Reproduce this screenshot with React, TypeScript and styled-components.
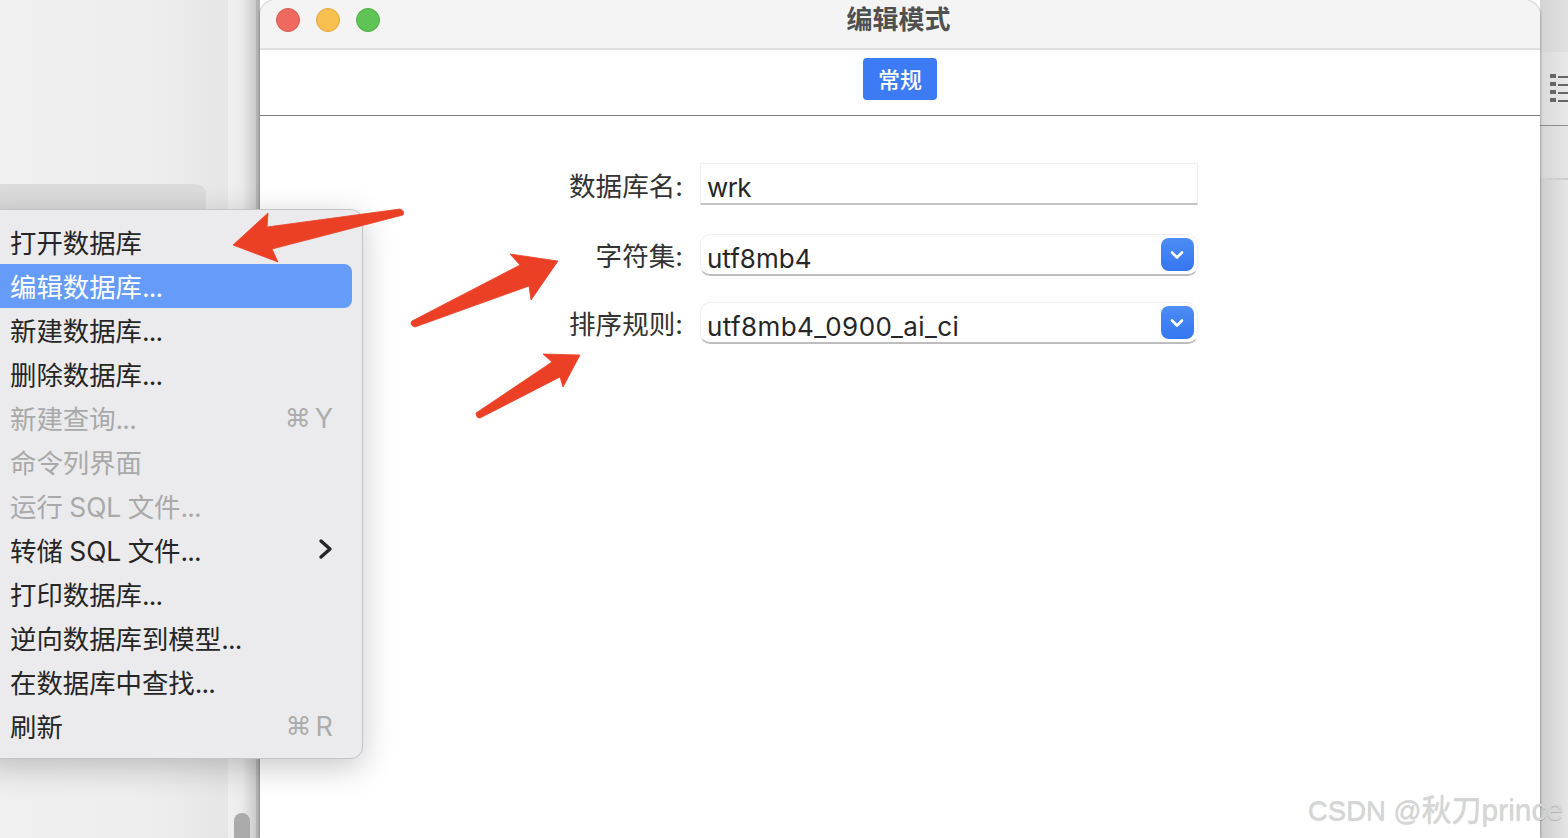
import React from "react";
import styled, { createGlobalStyle } from "styled-components";

const Global = createGlobalStyle`
  html, body { margin: 0; padding: 0; width: 1568px; height: 838px; overflow: hidden; background: #fff; }
  * { box-sizing: border-box; }
`;

const FONT = `Inter, "Noto Sans CJK SC", "Noto Sans", sans-serif`;

const Stage = styled.div`
  position: relative;
  width: 1568px;
  height: 838px;
  overflow: hidden;
  display: grid;
  grid-template-columns: 260px 1280px 28px;
  font-family: ${FONT};
  color: #262626;
`;

const Backdrop = styled.div`
  display: flex;
  background: #ececec;
  border-right: 4px solid #b4b4b4;
`;

const Sidebar = styled.div`
  width: 228px;
  padding-top: 184px;
  background: linear-gradient(90deg, #f0f0f0 0%, #eeeeee 65%, #e6e6e6 100%);
`;

const SidebarPanel = styled.div`
  width: 206px;
  height: 100px;
  border-radius: 0 10px 0 0;
  background: linear-gradient(180deg, #dcdcdc, #d6d6d6);
`;

const ScrollColumn = styled.div`
  flex: 1;
  display: flex;
  flex-direction: column;
  justify-content: flex-end;
  padding-left: 6px;
  background: linear-gradient(90deg, #f0f0f0 0%, #ebebeb 50%, #cbcbcb 100%);
`;

const ScrollThumb = styled.div`
  width: 16px;
  height: 25px;
  border-radius: 8px 8px 0 0;
  background: #aaaaaa;
`;

const Window = styled.div`
  position: relative;
  display: flex;
  flex-direction: column;
  background: #fff;
  border-radius: 16px 16px 0 0;
  box-shadow: 0 0 3px rgba(0, 0, 0, 0.45);
`;

const TitleBar = styled.div`
  position: relative;
  height: 50px;
  flex: none;
  display: flex;
  align-items: flex-start;
  justify-content: center;
  background: #f4f4f4;
  border-bottom: 2px solid #dfdfdf;
  border-radius: 16px 16px 0 0;
`;

const Lights = styled.div`
  position: absolute;
  left: 16px;
  top: 8px;
  display: flex;
  gap: 16px;
`;

const Light = styled.span<{ $fill: string; $edge: string }>`
  width: 24px;
  height: 24px;
  border-radius: 50%;
  background: ${(p) => p.$fill};
  border: 1px solid ${(p) => p.$edge};
`;

const Title = styled.div`
  font-size: 26px;
  line-height: 39px;
  font-weight: 700;
  color: #505050;
  margin-left: -3px;
`;

const TabBar = styled.div`
  height: 66px;
  flex: none;
  display: flex;
  justify-content: center;
  padding-top: 8px;
  border-bottom: 1px solid #7d7d7d;
`;

const Tab = styled.div`
  width: 74px;
  height: 42px;
  border-radius: 4px;
  background: #3d7bf4;
  color: #fff;
  font-size: 22px;
  line-height: 44px;
  text-align: center;
  font-weight: 500;
`;

const Form = styled.div`
  display: grid;
  grid-template-columns: 423px 498px;
  column-gap: 17px;
  padding-top: 47px;
`;

const Label = styled.div<{ $top: number }>`
  height: 42px;
  text-align: right;
  font-size: 26.6px;
  line-height: 47px;
  color: #333;
  margin-top: ${(p) => p.$top}px;
`;

const TextField = styled.div`
  height: 42px;
  padding-left: 6px;
  font-size: 26px;
  line-height: 47px;
  letter-spacing: -0.6px;
  background: #fff;
  border: 1px solid #f0f0f0;
  border-bottom: 2px solid #c4c4c4;
`;

const Select = styled.div<{ $top: number }>`
  position: relative;
  height: 42px;
  margin-top: ${(p) => p.$top}px;
  padding-left: 6px;
  font-size: 26px;
  line-height: 47px;
  background: #fff;
  border-radius: 10px;
  border: 1px solid #f0f0f0;
  border-bottom: 2px solid #bdbdbd;
`;

const WideValue = styled.span`
  letter-spacing: 0.4px;
`;

const SelectButton = styled.div`
  position: absolute;
  right: 3px;
  top: 3px;
  width: 33px;
  height: 33px;
  border-radius: 8px;
  display: flex;
  align-items: center;
  justify-content: center;
  padding-right: 1px;
  background: linear-gradient(180deg, #4d8df5 0%, #3575f0 100%);
`;

const RightEdge = styled.div`
  display: flex;
  flex-direction: column;
  background: #e4e4e4;
`;

const EdgeTop = styled.div`
  height: 52px;
  background: linear-gradient(90deg, #d4d4d4, #e0e0e0);
`;

const EdgeTools = styled.div`
  height: 74px;
  padding: 22px 0 0 10px;
  border-bottom: 1px solid #8c8c8c;
  background: linear-gradient(90deg, #d9d9d9, #e9e9e9);
`;

const EdgeStrip = styled.div`
  height: 54px;
  border-bottom: 2px solid #cfcfcf;
  background: linear-gradient(90deg, #d4d4d4, #e6e6e6);
`;

const EdgeRest = styled.div`
  flex: 1;
  background: linear-gradient(90deg, #cdcdcd, #e6e6e6);
`;

const Menu = styled.div`
  position: absolute;
  left: -20px;
  top: 209px;
  width: 383px;
  height: 550px;
  padding: 10px 10px 0 20px;
  background: #ebebed;
  border: 1px solid #c4c4c4;
  border-radius: 12px;
  box-shadow: 0 8px 32px rgba(0, 0, 0, 0.22);
`;

const MenuRow = styled.div<{ $active?: boolean; $muted?: boolean }>`
  height: 44px;
  display: flex;
  align-items: center;
  justify-content: space-between;
  margin-left: -20px;
  padding: 0 19px 2px 29px;
  font-size: 26.4px;
  white-space: nowrap;
  word-spacing: -1px;
  border-radius: ${(p) => (p.$active ? "0 8px 8px 0" : "0")};
  background: ${(p) => (p.$active ? "#659cf9" : "transparent")};
  color: ${(p) => (p.$active ? "#fff" : p.$muted ? "#a9a9a9" : "#262626")};
`;

const Dots = styled.span`
  letter-spacing: -0.8px;
`;

const Shortcut = styled.span`
  color: #adadad;
  font-size: 27px;
  display: flex;
  align-items: center;
  gap: 4px;
  padding-top: 2px;
`;

const ShortcutGlyph = styled.span`
  font-size: 26px;
  line-height: 30px;
`;

const Overlay = styled.svg`
  position: absolute;
  inset: 0;
  pointer-events: none;
`;

const Watermark = styled.div`
  position: absolute;
  left: 1308px;
  top: 790px;
  font-family: "Liberation Sans", "Noto Sans CJK SC", sans-serif;
  font-size: 27.5px;
  line-height: 40px;
  white-space: nowrap;
  color: #d6d6d6;
  text-shadow: 0 1px 1px rgba(0, 0, 0, 0.18);
`;

const WatermarkPart = styled.span<{ $size: number }>`
  font-size: ${(p) => p.$size}px;
`;

const Chevron = () => (
  <svg width="16" height="12" viewBox="0 0 16 12">
    <path d="M3 3.5 L8 8.5 L13 3.5" fill="none" stroke="#fff" strokeWidth="2.6" strokeLinecap="round" strokeLinejoin="round" />
  </svg>
);

const Row = ({ text, muted, active, dots, right }: { text: string; muted?: boolean; active?: boolean; dots?: boolean; right?: React.ReactNode }) => (
  <MenuRow $muted={muted} $active={active}>
    <span>
      {text}
      {dots && <Dots>...</Dots>}
    </span>
    {right}
  </MenuRow>
);

const Keys = ({ k }: { k: string }) => (
  <Shortcut>
    <ShortcutGlyph>⌘</ShortcutGlyph>
    <span>{k}</span>
  </Shortcut>
);

export default function App() {
  return (
    <Stage>
      <Global />
      <Backdrop>
        <Sidebar>
          <SidebarPanel />
        </Sidebar>
        <ScrollColumn>
          <ScrollThumb />
        </ScrollColumn>
      </Backdrop>
      <Window>
        <TitleBar>
          <Lights>
            <Light $fill="#ee6a5f" $edge="#d5594f" />
            <Light $fill="#f6bf4f" $edge="#dfa63c" />
            <Light $fill="#5fc454" $edge="#4fad46" />
          </Lights>
          <Title>编辑模式</Title>
        </TitleBar>
        <TabBar>
          <Tab>常规</Tab>
        </TabBar>
        <Form>
          <Label $top={0}>数据库名:</Label>
          <TextField>wrk</TextField>
          <Label $top={28}>字符集:</Label>
          <Select $top={29}>
            utf8mb4
            <SelectButton><Chevron /></SelectButton>
          </Select>
          <Label $top={25}>排序规则:</Label>
          <Select $top={26}>
            <WideValue>utf8mb4_0900_ai_ci</WideValue>
            <SelectButton><Chevron /></SelectButton>
          </Select>
        </Form>
      </Window>
      <RightEdge>
        <EdgeTop />
        <EdgeTools>
          <svg width="18" height="30" viewBox="0 0 18 30">
            <g fill="#666">
              <rect x="0" y="0" width="6" height="4" /><rect x="8" y="2" width="10" height="2" />
              <rect x="0" y="8" width="6" height="4" /><rect x="8" y="10" width="10" height="2" />
              <rect x="0" y="16" width="6" height="4" /><rect x="8" y="18" width="10" height="2" />
              <rect x="0" y="24" width="6" height="4" /><rect x="8" y="26" width="10" height="2" />
            </g>
          </svg>
        </EdgeTools>
        <EdgeStrip />
        <EdgeRest />
      </RightEdge>
      <Menu>
        <Row text="打开数据库" />
        <Row text="编辑数据库" dots active />
        <Row text="新建数据库" dots />
        <Row text="删除数据库" dots />
        <Row text="新建查询" dots muted right={<Keys k="Y" />} />
        <Row text="命令列界面" muted />
        <Row text="运行 SQL 文件" dots muted />
        <Row
          text="转储 SQL 文件"
          dots
          right={
            <svg width="16" height="24" viewBox="0 0 16 24">
              <path d="M4 4 L13 12 L4 20" fill="none" stroke="#262626" strokeWidth="3.4" strokeLinecap="round" strokeLinejoin="round" />
            </svg>
          }
        />
        <Row text="打印数据库" dots />
        <Row text="逆向数据库到模型" dots />
        <Row text="在数据库中查找" dots />
        <Row text="刷新" right={<Keys k="R" />} />
      </Menu>
      <Overlay width="1568" height="838" viewBox="0 0 1568 838">
        <g fill="#ec4026" stroke="#ec4026" strokeWidth="0.8" strokeLinejoin="round">
          <path d="M233 245 L268 213 L267 227 L400 209 Q405 211 403 215 L272 249 L278 262 Z" />
          <path d="M558 261 L510 254 L520 265 L412 321 Q409 325 415 327 L529 286 L531 300 Z" />
          <path d="M580 355 L543 354 L552 362 L476 413 Q476 418 480 418 L560 377 L563 387 Z" />
        </g>
      </Overlay>
      <Watermark>
        CSDN @<WatermarkPart $size={30}>秋刀</WatermarkPart>
        <WatermarkPart $size={30}>prince</WatermarkPart>
      </Watermark>
    </Stage>
  );
}
